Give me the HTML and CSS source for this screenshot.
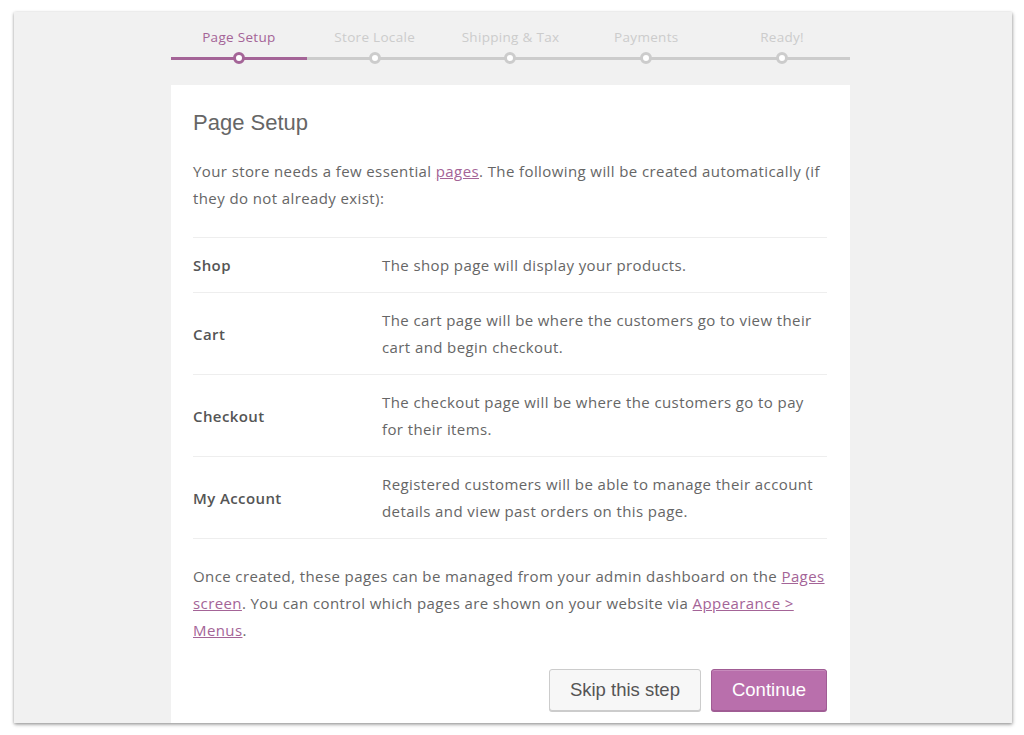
FILE: index.html
```html
<!DOCTYPE html>
<html lang="en">

<head>
  <meta charset="UTF-8" />
  <title>Setup Wizard - Page Setup</title>
  <link rel="stylesheet" href="styles.css">
</head>

<body>
  <div class="frame">
    <div class="setup">

      <ol class="steps">
        <li class="step active"><span class="step-label">Page Setup</span></li>
        <li class="step"><span class="step-label">Store Locale</span></li>
        <li class="step"><span class="step-label">Shipping &amp; Tax</span></li>
        <li class="step"><span class="step-label">Payments</span></li>
        <li class="step"><span class="step-label">Ready!</span></li>
      </ol>

      <div class="card">
        <h1>Page Setup</h1>
        <p>Your store needs a few essential <a href="#">pages</a>. The following will be created automatically (if they do not already exist):</p>

        <table class="pages">
          <tr>
            <th>Shop</th>
            <td>The shop page will display your products.</td>
          </tr>
          <tr>
            <th>Cart</th>
            <td>The cart page will be where the customers go to view their cart and begin checkout.</td>
          </tr>
          <tr>
            <th>Checkout</th>
            <td>The checkout page will be where the customers go to pay for their items.</td>
          </tr>
          <tr>
            <th>My Account</th>
            <td>Registered customers will be able to manage their account details and view past orders on this page.</td>
          </tr>
        </table>

        <p>Once created, these pages can be managed from your admin dashboard on the <a href="#">Pages screen</a>. You can control which pages are shown on your website via <a href="#">Appearance &gt; Menus</a>.</p>

        <div class="actions">
          <button class="btn btn-skip">Skip this step</button>
          <button class="btn btn-primary">Continue</button>
        </div>
      </div>

    </div>
  </div>
</body>

</html>
```

FILE: styles.css
```css
html,
body {
  margin: 0;
  padding: 0;
  background: #fff;
}

body {
  font-family: 'Open Sans', 'Liberation Sans', sans-serif;
  color: #666;
  padding: 12px 12px 12px 14px;
  box-sizing: border-box;
  height: 735px;
  overflow: hidden;
}

.frame {
  width: 998px;
  height: 711px;
  background: #f1f1f1;
  overflow: hidden;
  box-shadow: 0 1px 3px rgba(0, 0, 0, 0.35), 1px 2px 4px rgba(0, 0, 0, 0.15);
}

.setup {
  width: 679px;
  margin-left: 157px;
  padding-top: 16px;
}

/* progress steps */
.steps {
  display: flex;
  list-style: none;
  margin: 0 0 25px;
  padding: 0;
}

.step {
  flex: 1;
  text-align: center;
  position: relative;
  padding-bottom: 11px;
  border-bottom: 3px solid #ccc;
  font-size: 13.5px;
  letter-spacing: 0.3px;
  line-height: 18px;
  color: #ccc;
}

.step::after {
  content: "";
  position: absolute;
  left: 50%;
  bottom: -7px;
  width: 6px;
  height: 6px;
  margin-left: -6px;
  border: 3px solid #ccc;
  border-radius: 50%;
  background: #fff;
}

.step.active {
  color: #a46497;
  border-bottom-color: #a46497;
}

.step.active::after {
  border-color: #a46497;
}

/* main card */
.card {
  background: #fff;
  padding: 23px 23px 60px 22px;
}

.card h1 {
  margin: 0 0 21px;
  font-family: 'Liberation Sans', Arial, sans-serif;
  font-size: 22px;
  line-height: 29px;
  font-weight: normal;
  color: #666;
}

.card p {
  margin: 0;
  font-size: 15px;
  letter-spacing: 0.4px;
  line-height: 27px;
}

.card a {
  color: #a46497;
  text-decoration: underline;
}

.pages {
  width: 100%;
  border-collapse: collapse;
  margin: 25px 0 24px;
  font-size: 15px;
  letter-spacing: 0.4px;
  line-height: 27px;
}

.pages tr {
  border-top: 1px solid #eee;
  border-bottom: 1px solid #eee;
}

.pages th,
.pages td {
  padding: 14px 0 13px;
  vertical-align: middle;
  text-align: left;
}

.pages th {
  width: 189px;
  font-weight: 600;
  color: #555;
}

.pages td {
  padding-right: 8px;
}

.actions {
  display: flex;
  justify-content: flex-end;
  gap: 10px;
  margin-top: 25px;
}

.btn {
  font-family: 'Liberation Sans', Arial, sans-serif;
  font-size: 18.5px;
  height: 42px;
  padding: 0 20px;
  border-radius: 3px;
  cursor: pointer;
}

.btn-skip {
  background: #f7f7f7;
  border: 1px solid #ccc;
  color: #555;
  box-shadow: 0 1px 0 #ccc;
}

.btn-primary {
  background: #b96fac;
  border: 1px solid #a05c94;
  color: #fff;
  box-shadow: inset 0 1px 0 rgba(255, 255, 255, 0.2), 0 1px 0 #a05c94;
}
```
